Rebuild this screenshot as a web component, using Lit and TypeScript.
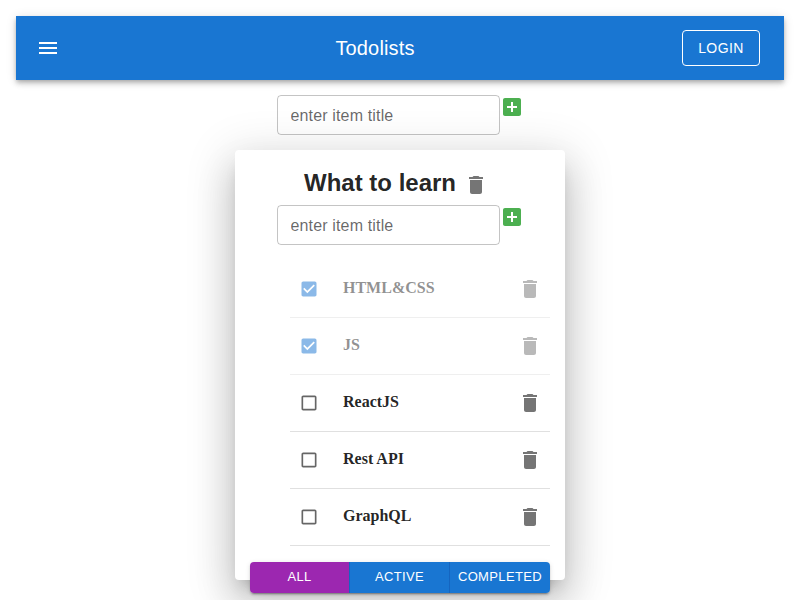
import { LitElement, html, css, svg } from "lit";
import { customElement, property, state } from "lit/decorators.js";
import { classMap } from "lit/directives/class-map.js";

const paths = {
  menu: "M3 18h18v-2H3v2zm0-5h18v-2H3v2zm0-7v2h18V6H3z",
  add: "M19 3H5c-1.11 0-2 .9-2 2v14c0 1.1.89 2 2 2h14c1.1 0 2-.9 2-2V5c0-1.1-.9-2-2-2zm-2 10h-4v4h-2v-4H7v-2h4V7h2v4h4v2z",
  trash: "M6 19c0 1.1.9 2 2 2h8c1.1 0 2-.9 2-2V7H6v12zM19 4h-3.5l-1-1h-5l-1 1H5v2h14V4z",
  checked: "M19 3H5c-1.11 0-2 .9-2 2v14c0 1.1.89 2 2 2h14c1.11 0 2-.9 2-2V5c0-1.1-.89-2-2-2zm-9 14l-5-5 1.41-1.41L10 14.17l7.59-7.59L19 8l-9 9z",
  unchecked: "M19 5v14H5V5h14m0-2H5c-1.1 0-2 .9-2 2v14c0 1.1.9 2 2 2h14c1.1 0 2-.9 2-2V5c0-1.1-.9-2-2-2z",
};

const icon = (name: keyof typeof paths, size = 24) => html`
  <svg width=${size} height=${size} viewBox="0 0 24 24" fill="currentColor">${svg`<path d=${paths[name]}></path>`}</svg>`;

const base = css`
  * { box-sizing: border-box; }
  svg { display: block; flex: none; }
  button {
    border: 0; padding: 0; margin: 0; background: none; color: inherit;
    font-family: "Liberation Sans", Arial, sans-serif; cursor: pointer;
    display: flex; align-items: center; justify-content: center;
  }
`;

@customElement("add-item-form")
export class AddItemForm extends LitElement {
  static styles = [base, css`
    :host { display: flex; justify-content: center; align-items: flex-start; height: 40px; }
    input {
      width: 223px; height: 40px; padding: 9px 13px 7px; margin: 0; outline: 0;
      border: 1px solid rgba(0, 0, 0, 0.23); border-radius: 4px; background: none;
      font: 16px "Liberation Sans", Arial, sans-serif; letter-spacing: 0.00938em; color: rgba(0, 0, 0, 0.87);
    }
    input::placeholder { color: rgba(0, 0, 0, 0.6); opacity: 1; }
    .add { color: #4caf50; }
  `];

  render() {
    return html`<input placeholder="enter item title" /><button class="add">${icon("add")}</button>`;
  }
}

interface Task { title: string; done: boolean; }

@customElement("todo-list")
export class TodoList extends LitElement {
  @property() heading = "";
  @property({ attribute: false }) tasks: Task[] = [];
  @state() filter = "All";

  static styles = [base, css`
    :host {
      display: block; width: 330px; height: 430px; padding: 15px;
      background: #fff; border-radius: 4px;
      box-shadow: 0 11px 15px -7px rgba(0, 0, 0, 0.2), 0 24px 38px 3px rgba(0, 0, 0, 0.14), 0 9px 46px 8px rgba(0, 0, 0, 0.12);
    }
    .head { display: flex; justify-content: center; height: 40px; }
    h2 { margin: 0; font: bold 24px/36px "Liberation Sans", Arial, sans-serif; }
    .trash { width: 40px; height: 40px; color: rgba(0, 0, 0, 0.54); }
    ul { list-style: none; margin: 16px 0; padding: 0 0 0 40px; }
    li {
      display: flex; align-items: center; height: 57px; padding-left: 9px;
      border-bottom: 1px solid rgba(0, 0, 0, 0.12);
    }
    .done { opacity: 0.5; }
    .check { width: 20px; height: 20px; color: rgba(0, 0, 0, 0.6); }
    .done .check { color: #1976d2; }
    .title { flex: 1; margin: -2px 0 0 24px; font: bold 16px/24px "Liberation Serif", "Times New Roman", serif; }
    .filters {
      display: grid; grid-template-columns: repeat(3, 1fr); overflow: hidden; border-radius: 4px;
    }
    .shadow {
      border-radius: 4px;
      box-shadow: 0 3px 1px -2px rgba(0, 0, 0, 0.2), 0 2px 2px 0 rgba(0, 0, 0, 0.14), 0 1px 5px 0 rgba(0, 0, 0, 0.12);
    }
    .filter {
      height: 31px; padding-bottom: 3px; border-right: 1px solid #1565c0; background: #1976d2; color: #fff;
      font-size: 13px; letter-spacing: 0.02857em; text-transform: uppercase;
    }
    .filter:last-child { border-right: 0; }
    .filter.current { background: #9c27b0; }
  `];

  render() {
    return html`
      <div class="head"><h2>${this.heading}</h2><button class="trash">${icon("trash")}</button></div>
      <add-item-form></add-item-form>
      <ul>
        ${this.tasks.map((t) => html`
          <li class=${classMap({ done: t.done })}>
            <button class="check">${icon(t.done ? "checked" : "unchecked", 20)}</button>
            <span class="title">${t.title}</span>
            <button class="trash">${icon("trash")}</button>
          </li>`)}
      </ul>
      <div class="shadow"><div class="filters">
        ${["All", "Active", "Completed"].map((f) => html`
          <button class=${classMap({ filter: true, current: f === this.filter })}
            @click=${() => (this.filter = f)}>${f}</button>`)}
      </div></div>`;
  }
}

@customElement("app-root")
export class AppRoot extends LitElement {
  static styles = [base, css`
    :host {
      display: flex; flex-direction: column; height: 600px; overflow: hidden; padding: 16px;
      box-sizing: border-box; background: #fff; color: rgba(0, 0, 0, 0.87);
    }
    header {
      flex: none; display: flex; align-items: center; justify-content: space-between;
      height: 64px; padding: 0 24px 0 12px; background: #1976d2; color: #fff;
      font-family: "Liberation Sans", Arial, sans-serif;
      box-shadow: 0 2px 4px -1px rgba(0, 0, 0, 0.2), 0 4px 5px 0 rgba(0, 0, 0, 0.14), 0 1px 10px 0 rgba(0, 0, 0, 0.12);
    }
    .menu { width: 40px; height: 40px; }
    .brand { font-size: 20px; line-height: 32px; letter-spacing: 0.0075em; }
    .login {
      width: 78px; height: 36px; border: 1px solid #fff; border-radius: 4px;
      font-size: 14px; letter-spacing: 0.02857em;
    }
    add-item-form { flex: none; margin: 15px 0; }
    todo-list { flex: none; align-self: center; }
  `];

  private tasks: Task[] = [
    { title: "HTML&CSS", done: true },
    { title: "JS", done: true },
    { title: "ReactJS", done: false },
    { title: "Rest API", done: false },
    { title: "GraphQL", done: false },
  ];

  render() {
    return html`
      <header>
        <button class="menu">${icon("menu")}</button>
        <div class="brand">Todolists</div>
        <button class="login">LOGIN</button>
      </header>
      <add-item-form></add-item-form>
      <todo-list heading="What to learn" .tasks=${this.tasks}></todo-list>`;
  }
}
